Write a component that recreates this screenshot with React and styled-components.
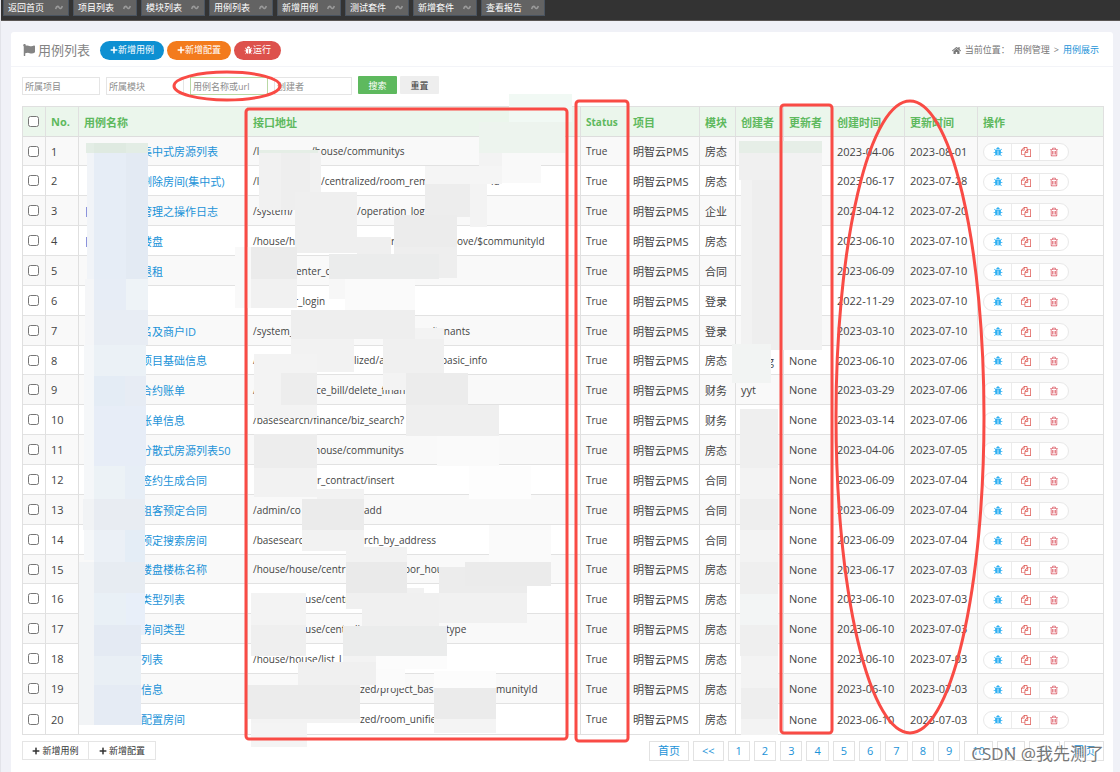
import React from "react";
import styled, { createGlobalStyle, css } from "styled-components";
import { FaPlus, FaHome, FaFlag } from "react-icons/fa";

const GlobalStyle = createGlobalStyle`
  * {
    box-sizing: border-box;
  }
  body {
    margin: 0;
    background: #f0f1f7;
    color: #444;
    font-family: "Open Sans", "Noto Sans CJK SC", sans-serif;
    font-size: 11px;
  }
  button, input {
    font-family: inherit;
  }
  a {
    color: #1b93d8;
    text-decoration: none;
  }
`;

const Page = styled.div`
  position: relative;
  display: flex;
  flex-direction: column;
  min-height: 100vh;
  border-left: 1px solid #e2e3e9;
`;
const TopBar = styled.nav`
  display: flex;
  gap: 4px;
  height: 21px;
  padding-left: 2px;
  background: #333;
  border-bottom: 1px solid #5a5654;
`;
const Tab = styled.a`
  display: flex;
  align-items: center;
  justify-content: space-between;
  width: 64px;
  height: 16px;
  padding: 0 5px 0 4px;
  background: #636363;
  border: 1px solid #4a5460;
  border-top: 0;
  color: #fff;
  font-size: 9px;
  line-height: 14px;
  white-space: nowrap;
  &:first-child {
    width: 66px;
  }
`;
const Card = styled.main`
  flex: 1;
  margin: 11px 7px 0 10px;
  background: #fff;
  border-radius: 3px 3px 0 0;
`;
const CardHeader = styled.header`
  display: flex;
  align-items: center;
  justify-content: space-between;
  height: 35px;
  padding: 2px 14px 0 12px;
  border-bottom: 1px solid #f3f4f8;
`;
const Caption = styled.div`
  display: flex;
  align-items: center;
  gap: 3px;
`;
const Title = styled.h1`
  display: flex;
  align-items: center;
  gap: 3px;
  margin: 0 7px 0 0;
  color: #848484;
  font-size: 13px;
  font-weight: 400;
  line-height: 18px;
`;
const PillButton = styled.button`
  display: flex;
  align-items: center;
  justify-content: center;
  height: 19px;
  padding: 0 10px;
  border: 0;
  border-radius: 10px;
  background: ${(p) => p.$color};
  color: #fff;
  font-size: 9px;
  line-height: 14px;
`;
const Breadcrumb = styled.nav`
  display: flex;
  align-items: center;
  gap: 4px;
  color: #777;
  font-size: 9px;
  line-height: 14px;
`;
const Body = styled.div`
  padding: 9px 9px 0 11px;
`;
const SearchForm = styled.form`
  display: flex;
  align-items: flex-start;
  gap: 6px;
  margin-bottom: 11px;
`;
const SearchInput = styled.input`
  width: 78px;
  height: 18px;
  margin-top: 1px;
  padding: 0 2px;
  border: 1px solid ${(p) => (p.$valid ? "#b9d8a4" : "#e5e5e5")};
  background: #fff;
  font-size: 9px;
  &::placeholder {
    color: #8c8c8c;
  }
`;
const FormButton = styled.button`
  width: 39px;
  height: 18px;
  margin-right: -3px;
  padding: 0;
  border: 0;
  border-radius: 1px;
  background: ${(p) => (p.$primary ? "#5eb95e" : "#eee")};
  color: ${(p) => (p.$primary ? "#fff" : "#333")};
  font-size: 9px;
`;

const Table = styled.table`
  width: 100%;
  table-layout: fixed;
  border: 1px solid #e0e0e0;
  border-collapse: separate;
  border-spacing: 0;
`;
const cell = css`
  padding: 0 5px;
  border-right: 1px solid #e0e0e0;
  font-size: ${(p) => (p.$small ? 10 : 11)}px;
  text-align: left;
  white-space: nowrap;
  &:last-child {
    border-right: 0;
  }
`;
const Th = styled.th`
  ${cell}
  height: 30px;
  background: #ebf6ec;
  border-bottom: 1px solid #ddd;
  color: #5eb95e;
  font-weight: 700;
`;
const Td = styled.td`
  ${cell}
  height: 30px;
  border-bottom: 1px solid #e2e2e2;
`;
const Tr = styled.tr`
  &:nth-child(odd) {
    background: #f9f9f9;
  }
  &:nth-child(7n + 1) ${Td} {
    height: 29px;
  }
  &:last-child ${Td} {
    border-bottom: 0;
  }
`;
const Check = styled.input`
  display: block;
  width: 11px;
  height: 11px;
  margin: 0;
`;
const Part = styled.span`
  display: inline-block;
  width: ${(p) => (p.$width ? p.$width + "px" : "auto")};
`;
const Actions = styled.div`
  display: inline-flex;
  height: 18px;
  margin-top: 2px;
  border: 1px solid #e9e9e9;
  border-radius: 9px;
  background: #fff;
  vertical-align: middle;
`;
const Action = styled.button`
  display: flex;
  align-items: center;
  justify-content: center;
  width: 28px;
  padding: 0;
  border: 0;
  border-right: 1px solid #ececec;
  background: none;
  color: ${(p) => p.$color};
  &:last-child {
    border-right: 0;
  }
`;
const Footer = styled.footer`
  display: flex;
  align-items: flex-start;
  justify-content: space-between;
  margin-top: 6px;
`;
const FooterButtons = styled.div`
  display: flex;
`;
const FooterButton = styled.button`
  display: flex;
  align-items: center;
  justify-content: center;
  gap: 2px;
  width: 67px;
  height: 19px;
  padding: 0;
  border: 1px solid #e5e5e5;
  background: #fff;
  color: #333;
  font-size: 9px;
  & + & {
    border-left: 0;
  }
`;
const Pager = styled.nav`
  display: flex;
  gap: 4px;
`;
const PageLink = styled.a`
  height: 20px;
  padding: 0 ${(p) => (p.$wide ? 8 : 7)}px;
  border: 1px solid #e2e2e2;
  line-height: 18px;
`;
const Overlay = styled.svg`
  position: absolute;
  top: 0;
  left: -1px;
  pointer-events: none;
`;
const Watermark = styled.div`
  position: absolute;
  right: 16px;
  bottom: 6px;
  color: #777;
  font-size: 17px;
  line-height: 24px;
  text-shadow: 1px 1px 0 #fff;
`;

const bugPath = "M1696 960q0 26-19 45t-45 19h-224q0 171-67 290l208 209q19 19 19 45t-19 45q-18 19-45 19t-45-19l-198-197q-5 5-15 13t-42 28.5-65 36.5-82 29-97 13v-896h-128v896q-51 0-101.5-13.5t-87-33-66-39-43.5-32.5l-15-14-183 207q-20 21-48 21-24 0-43-16-19-18-20.5-44.5t15.5-46.5l202-227q-58-114-58-274h-224q-26 0-45-19t-19-45 19-45 45-19h224v-294l-173-173q-19-19-19-45t19-45 45-19 45 19l173 173h844l173-173q19-19 45-19t45 19 19 45-19 45l-173 173v294h224q26 0 45 19t19 45zm-480-576h-640q0-133 93.5-226.5t226.5-93.5 226.5 93.5 93.5 226.5z";
const copyPath = "M1696 384q40 0 68 28t28 68v1216q0 40-28 68t-68 28h-960q-40 0-68-28t-28-68v-288h-544q-40 0-68-28t-28-68v-672q0-40 20-88t48-76l408-408q28-28 76-48t88-20h416q40 0 68 28t28 68v328q68-40 128-40h416zm-544 213l-299 299h299v-299zm-640-384l-299 299h299v-299zm196 647l316-316v-416h-384v416q0 40-28 68t-68 28h-416v640h512v-256q0-40 20-88t48-76zm956 804v-1152h-384v416q0 40-28 68t-68 28h-416v640h896z";
const trashPath = "M704 736v576q0 14-9 23t-23 9h-64q-14 0-23-9t-9-23v-576q0-14 9-23t23-9h64q14 0 23 9t9 23zm256 0v576q0 14-9 23t-23 9h-64q-14 0-23-9t-9-23v-576q0-14 9-23t23-9h64q14 0 23 9t9 23zm256 0v576q0 14-9 23t-23 9h-64q-14 0-23-9t-9-23v-576q0-14 9-23t23-9h64q14 0 23 9t9 23zm128 724v-948h-896v948q0 22 7 40.5t14.5 27 10.5 8.5h832q3 0 10.5-8.5t14.5-27 7-40.5zm-672-1076h448l-48-117q-7-9-17-11h-317q-10 2-17 11zm928 32v64q0 14-9 23t-23 9h-96v948q0 83-47 143.5t-113 60.5h-832q-66 0-113-58.5t-47-141.5v-952h-96q-14 0-23-9t-9-23v-64q0-14 9-23t23-9h309l70-167q15-37 54-63t79-26h320q40 0 79 26t54 63l70 167h309q14 0 23 9t9 23z";

function Icon({ path, size }) {
  return (
    <svg width={size} height={size} viewBox="0 0 1792 1792" fill="currentColor" aria-hidden="true">
      <path d={path} />
    </svg>
  );
}

function TabMark() {
  return (
    <svg width="8" height="5" viewBox="0 0 8 5" fill="none" stroke="#9a9a9a" strokeWidth="1.6" aria-hidden="true">
      <path d="M0.7 4 Q1.2 1.2 2.8 1.4 Q3.6 1.6 4.2 2.6 Q4.9 3.7 5.7 3.4 Q6.8 3 7.3 1" />
    </svg>
  );
}

const tabs = ["返回首页", "项目列表", "模块列表", "用例列表", "新增用例", "测试套件", "新增套件", "查看报告"];
const pages = ["首页", "<<", "1", "2", "3", "4", "5", "6", "7", "8", "9", "10", "11", ">>", "尾页"];

const columns = [
  ["No.", 33],
  ["用例名称", 169],
  ["接口地址", null],
  ["Status", 47],
  ["项目", 72],
  ["模块", 36],
  ["创建者", 48],
  ["更新者", 48],
  ["创建时间", 73],
  ["更新时间", 73],
  ["操作", 125],
];

// url parts: [start in the cell, text]
const rows = [
  { name: "集中式房源列表", url: [[0, "/l"], [58, "/house/communitys"]], module: "房态", created: "2023-04-06", updated: "2023-08-01" },
  { name: "删除房间(集中式)", url: [[0, "/l"], [68, "/centralized/room_rem"], [238, "id"]], module: "房态", created: "2023-06-17", updated: "2023-07-28" },
  { name: "管理之操作日志", url: [[0, "/system/"], [104, "/operation_log"]], module: "企业", created: "2023-04-12", updated: "2023-07-20" },
  { name: "楼盘", url: [[0, "/house/h"], [138, "r"], [204, "ove/$communityId"]], module: "房态", created: "2023-06-10", updated: "2023-07-10" },
  { name: "退租", url: [[43, "enter_c"]], module: "合同", created: "2023-06-09", updated: "2023-07-10" },
  { name: "", url: [[41, "r_login"]], module: "登录", created: "2022-11-29", updated: "2023-07-10" },
  { name: "名及商户ID", url: [[0, "/system_"], [178, "/tenants"]], module: "登录", created: "2023-03-10", updated: "2023-07-10" },
  { name: "项目基础信息", url: [[0, "/"], [101, "lized/a"], [188, "basic_info"]], module: "房态", creator: [[27, "g"]], updater: "None", created: "2023-06-10", updated: "2023-07-06" },
  { name: "合约账单", url: [[0, "/"], [63, "ce_bill/delete_finan"]], module: "财务", creator: [[0, "yyt"]], updater: "None", created: "2023-03-29", updated: "2023-07-06" },
  { name: "账单信息", url: [[0, "/basesearch/finance/biz_search?"]], module: "财务", updater: "None", created: "2023-03-14", updated: "2023-07-06" },
  { name: "分散式房源列表50", url: [[61, "house/communitys"]], module: "房态", updater: "None", created: "2023-04-06", updated: "2023-07-05" },
  { name: "签约生成合同", url: [[64, "r_contract/insert"]], module: "合同", updater: "None", created: "2023-06-09", updated: "2023-07-04" },
  { name: "租客预定合同", url: [[0, "/admin/co"], [111, "add"]], module: "合同", updater: "None", created: "2023-06-09", updated: "2023-07-04" },
  { name: "预定搜索房间", url: [[0, "/basesearc"], [111, "rch_by_address"]], module: "合同", updater: "None", created: "2023-06-09", updated: "2023-07-04" },
  { name: "楼盘楼栋名称", url: [[0, "/house/house/centr"], [151, "oor_hou"]], module: "房态", updater: "None", created: "2023-06-17", updated: "2023-07-03" },
  { name: "类型列表", url: [[52, "use/centr"], [171, "_typ"]], module: "房态", updater: "None", created: "2023-06-10", updated: "2023-07-03" },
  { name: "房间类型", url: [[52, "use/centrali"], [193, "type"]], module: "房态", updater: "None", created: "2023-06-10", updated: "2023-07-03" },
  { name: "列表", url: [[0, "/house/house/list_l"]], module: "房态", updater: "None", created: "2023-06-10", updated: "2023-07-03" },
  { name: "信息", url: [[107, "zed/project_bas"], [243, "munityId"]], module: "房态", updater: "None", created: "2023-06-10", updated: "2023-07-03" },
  { name: "配置房间", url: [[107, "zed/room_unifie"]], module: "房态", updater: "None", created: "2023-06-10", updated: "2023-07-03" },
];

// mosaic blocks: x1, y1, x2, y2, fill
const mosaic = [
  // case names
  [86, 143, 148, 153, "#e3ede5"],
  [94, 143, 126, 153, "#dfeae1"],
  [87, 153, 94, 279, "#f1f4f8"],
  [94, 153, 126, 279, "#e6edf6"],
  [126, 153, 148, 279, "#e3eaf3"],
  [85, 279, 94, 345, "#f5f6f8"],
  [94, 279, 126, 310, "#e7edf6"],
  [126, 279, 148, 310, "#eef3f7"],
  [94, 310, 148, 345, "#e8edf4"],
  [84, 345, 94, 560, "#f5f7f9"],
  [94, 345, 146, 376, "#ebf1f6"],
  [94, 376, 125, 406, "#e4ecf5"],
  [125, 376, 146, 406, "#e7ecf4"],
  [94, 406, 146, 466, "#e7edf7"],
  [94, 466, 125, 499, "#ecf2f6"],
  [125, 466, 145, 499, "#e7eef6"],
  [83, 499, 145, 530, "#e8ecf2"],
  [83, 499, 94, 530, "#f1f3f5"],
  [94, 530, 125, 562, "#ebf0f6"],
  [125, 530, 145, 562, "#e4edf6"],
  [79, 562, 94, 725, "#f2f4f6"],
  [94, 562, 145, 593, "#e7ecf2"],
  [94, 593, 126, 625, "#e9f0f6"],
  [126, 593, 145, 635, "#e8eff9"],
  [94, 625, 141, 656, "#e4eaf3"],
  [94, 656, 141, 685, "#e9eff5"],
  [94, 685, 141, 725, "#e5ebf4"],
  [86, 207, 87, 217, "#8c93dc"],
  [86, 237, 87, 247, "#8c93dc"],
  // urls
  [509, 94, 572, 122, "#f1f9f4"],
  [479, 122, 565, 153, "#edf4ee"],
  [479, 153, 502, 182, "#f3f3f3"],
  [502, 157, 541, 183, "#f9f9f9"],
  [425, 166, 502, 184, "#f5f5f5"],
  [425, 184, 470, 217, "#ededed"],
  [470, 184, 487, 227, "#f3f3f3"],
  [259, 150, 321, 210, "#f1f1f1"],
  [281, 153, 310, 210, "#eeeeee"],
  [259, 150, 318, 153, "#e5eee6"],
  [295, 192, 357, 253, "#efefef"],
  [394, 215, 457, 247, "#ececec"],
  [357, 237, 391, 255, "#efefef"],
  [394, 247, 457, 278, "#eeeeee"],
  [329, 254, 439, 279, "#ebecec"],
  [329, 279, 345, 299, "#f7f7f7"],
  [235, 247, 251, 308, "#f9f9f9"],
  [251, 247, 297, 279, "#ebebeb"],
  [251, 279, 297, 308, "#f1f1f1"],
  [345, 279, 415, 310, "#fafafa"],
  [291, 310, 415, 339, "#eeeeee"],
  [291, 339, 354, 372, "#f2f2f2"],
  [415, 328, 444, 339, "#f3f3f3"],
  [383, 339, 444, 373, "#f0f0f0"],
  [383, 373, 406, 390, "#f3f3f3"],
  [254, 354, 317, 418, "#f3f3f3"],
  [281, 373, 317, 405, "#ededed"],
  [406, 373, 468, 405, "#ececec"],
  [406, 405, 499, 436, "#efefef"],
  [437, 436, 499, 466, "#fafafa"],
  [469, 466, 531, 499, "#fdfdfd"],
  [254, 434, 317, 468, "#ededed"],
  [254, 468, 317, 497, "#f2f2f2"],
  [317, 489, 364, 499, "#f2f2f2"],
  [302, 499, 364, 530, "#ebebeb"],
  [302, 530, 364, 551, "#f2f2f2"],
  [489, 525, 551, 562, "#fafafa"],
  [346, 547, 407, 562, "#f2f2f2"],
  [346, 562, 407, 593, "#eaeaea"],
  [346, 593, 362, 609, "#f0f0f0"],
  [407, 588, 424, 607, "#f1f1f1"],
  [362, 593, 439, 626, "#f0f0f0"],
  [439, 567, 527, 593, "#ececec"],
  [465, 562, 551, 586, "#ebebeb"],
  [439, 593, 527, 623, "#f1f1f1"],
  [251, 593, 306, 625, "#f3f3f3"],
  [251, 625, 306, 656, "#efefef"],
  [343, 626, 447, 656, "#ebecec"],
  [376, 656, 447, 669, "#fcfcfc"],
  [343, 656, 376, 662, "#f3f3f3"],
  [298, 662, 376, 685, "#f0f0f0"],
  [376, 669, 405, 688, "#fbfbfb"],
  [248, 685, 360, 719, "#ececec"],
  [434, 671, 496, 688, "#fcfcfc"],
  [434, 688, 496, 719, "#ebebeb"],
  [434, 719, 496, 733, "#f4f4f4"],
  [251, 719, 360, 723, "#f3f3f3"],
  [251, 723, 307, 747, "#f4f4f4"],
  // creators and updaters
  [739, 141, 822, 153, "#e6eee7"],
  [739, 153, 783, 180, "#f0f0f0"],
  [741, 180, 752, 350, "#f2f2f2"],
  [752, 180, 783, 350, "#eeeeee"],
  [783, 153, 822, 350, "#f2f2f2"],
  [732, 344, 771, 383, "#f2f4f3"],
  [740, 409, 778, 468, "#efefef"],
  [740, 468, 778, 499, "#f3f3f3"],
  [740, 499, 778, 530, "#eeeeee"],
  [740, 530, 778, 562, "#f3f3f3"],
  [740, 562, 778, 594, "#efefef"],
  [740, 594, 778, 625, "#f3f5f5"],
  [740, 625, 778, 656, "#efefef"],
  [741, 656, 778, 688, "#f3f3f3"],
  [741, 688, 778, 719, "#eeeeee"],
  [741, 719, 778, 735, "#f3f3f3"],
];

function Parts({ items }) {
  if (!items) return null;
  return (
    <>
      {items[0][0] > 0 && <Part $width={items[0][0]} />}
      {items.map(([start, text], idx) => {
        const next = items[idx + 1];
        return (
          <Part key={start} $width={next && next[0] - start}>{text}</Part>
        );
      })}
    </>
  );
}

function CaseRow({ row, no }) {
  return (
    <Tr>
      <Td><Check type="checkbox" aria-label={"选择 " + no} /></Td>
      <Td>{no}</Td>
      <Td><Part $width={57} /><a href="#case">{row.name}</a></Td>
      <Td $small><Parts items={row.url} /></Td>
      <Td $small>True</Td>
      <Td>明智云PMS</Td>
      <Td>{row.module}</Td>
      <Td><Parts items={row.creator} /></Td>
      <Td>{row.updater}</Td>
      <Td>{row.created}</Td>
      <Td>{row.updated}</Td>
      <Td>
        <Actions>
          <Action $color="#2fb0f2" aria-label="运行"><Icon path={bugPath} size={10} /></Action>
          <Action $color="#dd514c" aria-label="复制"><Icon path={copyPath} size={10} /></Action>
          <Action $color="#d9505c" aria-label="删除"><Icon path={trashPath} size={10} /></Action>
        </Actions>
      </Td>
    </Tr>
  );
}

export default function App() {
  return (
    <Page>
      <GlobalStyle />
      <TopBar>
        {tabs.map((tab) => (
          <Tab key={tab} href="#tab">{tab}<TabMark /></Tab>
        ))}
      </TopBar>
      <Card>
        <CardHeader>
          <Caption>
            <Title><FaFlag size={12} />用例列表</Title>
            <PillButton $color="#0e90d2"><FaPlus size={8} />新增用例</PillButton>
            <PillButton $color="#f37b1d"><FaPlus size={8} />新增配置</PillButton>
            <PillButton $color="#dd514c"><Icon path={bugPath} size={9} />运行</PillButton>
          </Caption>
          <Breadcrumb>
            <FaHome size={9} />
            <span>当前位置：</span>
            <span>用例管理</span>
            <span>&gt;</span>
            <a href="#list">用例展示</a>
          </Breadcrumb>
        </CardHeader>
        <Body>
          <SearchForm>
            <SearchInput placeholder="所属项目" aria-label="所属项目" />
            <SearchInput placeholder="所属模块" aria-label="所属模块" />
            <SearchInput placeholder="用例名称或url" aria-label="用例名称或url" $valid />
            <SearchInput placeholder="创建者" aria-label="创建者" />
            <FormButton type="button" $primary>搜索</FormButton>
            <FormButton type="reset">重置</FormButton>
          </SearchForm>
          <Table>
            <colgroup>
              <col width="23" />
              {columns.map(([title, width]) => (
                <col key={title} width={width || undefined} />
              ))}
            </colgroup>
            <thead>
              <tr>
                <Th><Check type="checkbox" aria-label="全选" /></Th>
                {columns.map(([title]) => (
                  <Th key={title} $small={title === "Status"}>{title}</Th>
                ))}
              </tr>
            </thead>
            <tbody>
              {rows.map((row, idx) => (
                <CaseRow key={idx} row={row} no={idx + 1} />
              ))}
            </tbody>
          </Table>
          <Footer>
            <FooterButtons>
              <FooterButton><FaPlus size={8} />新增用例</FooterButton>
              <FooterButton><FaPlus size={8} />新增配置</FooterButton>
            </FooterButtons>
            <Pager>
              {pages.map((page) => (
                <PageLink key={page} href="#page" $wide={isNaN(page)}>{page}</PageLink>
              ))}
            </Pager>
          </Footer>
        </Body>
      </Card>
      <Overlay width="1120" height="772" viewBox="0 0 1120 772">
        {mosaic.map(([x1, y1, x2, y2, fill], idx) => (
          <rect key={idx} x={x1} y={y1} width={x2 - x1} height={y2 - y1} fill={fill} />
        ))}
        <g fill="none" stroke="#f94b45" strokeWidth="3">
          <ellipse cx="227" cy="86" rx="53" ry="14" />
          <rect x="246" y="109" width="321" height="630" rx="3" />
          <rect x="576" y="101" width="52" height="640" rx="3" />
          <rect x="781" y="105" width="51" height="628" rx="3" />
          <ellipse cx="910" cy="417" rx="74" ry="316" />
        </g>
      </Overlay>
      <Watermark>CSDN @我先测了</Watermark>
    </Page>
  );
}
